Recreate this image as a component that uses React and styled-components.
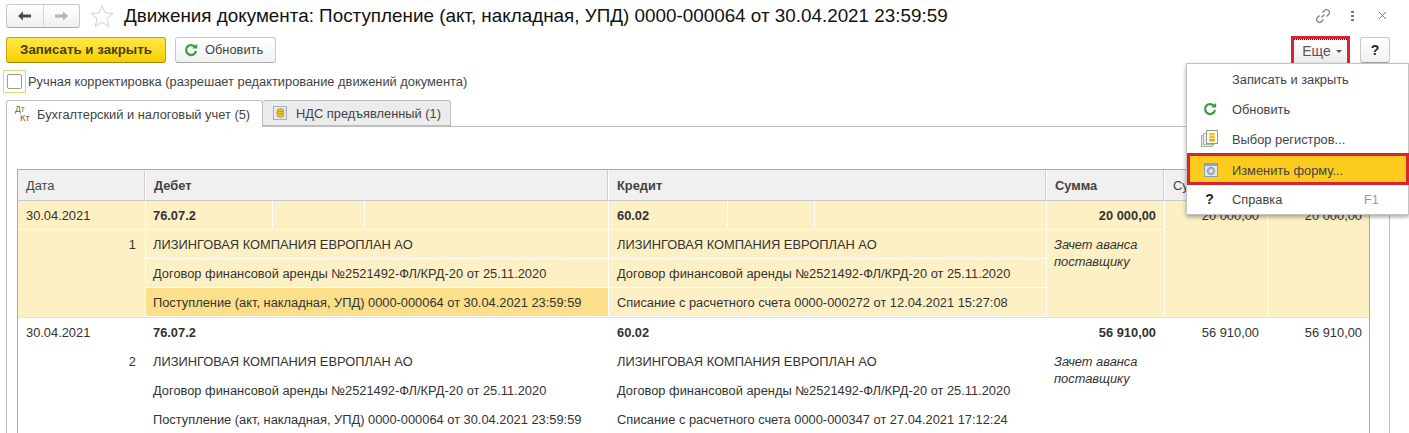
import React from "react";
import styled, { createGlobalStyle } from "styled-components";

const GlobalStyle = createGlobalStyle`
  html, body {
    margin: 0;
    padding: 0;
    background: #fff;
    overflow: hidden;
  }
  * {
    box-sizing: border-box;
  }
`;

const COLUMNS = "128px 463px 438px 118px 103px 102px";

const RECORDS = [
  {
    id: 1,
    selected: true,
    date: "30.04.2021",
    debit: "76.07.2",
    credit: "60.02",
    sum: "20 000,00",
    debitDoc: "Поступление (акт, накладная, УПД) 0000-000064 от 30.04.2021 23:59:59",
    creditDoc: "Списание с расчетного счета 0000-000272 от 12.04.2021 15:27:08",
  },
  {
    id: 2,
    selected: false,
    date: "30.04.2021",
    debit: "76.07.2",
    credit: "60.02",
    sum: "56 910,00",
    debitDoc: "Поступление (акт, накладная, УПД) 0000-000064 от 30.04.2021 23:59:59",
    creditDoc: "Списание с расчетного счета 0000-000347 от 27.04.2021 17:12:24",
  },
];

const COMPANY = "ЛИЗИНГОВАЯ КОМПАНИЯ ЕВРОПЛАН АО";
const CONTRACT = "Договор финансовой аренды №2521492-ФЛ/КРД-20 от 25.11.2020";

const RefreshIcon = ({ size = 14 }) => (
  <svg width={size} height={size} viewBox="0 0 14 14" fill="none">
    <path d="M11.2 4.200A5 5 0 1 0 12 8" stroke="#3a9a3e" strokeWidth="2.2" />
    <path d="M8.200 5.600h5V.8z" fill="#3a9a3e" />
  </svg>
);

const CoinsIcon = () => (
  <svg width="14" height="14" viewBox="0 0 14 14">
    <rect x="0.5" y="0.5" width="13" height="13" fill="#e6ecf3" stroke="#a3afbd" />
    <ellipse cx="7.5" cy="4.5" rx="3.6" ry="1.7" fill="#f3c52c" stroke="#a98614" strokeWidth="0.7" />
    <ellipse cx="7" cy="7" rx="3.6" ry="1.7" fill="#f3c52c" stroke="#a98614" strokeWidth="0.7" />
    <ellipse cx="7.500" cy="9.500" rx="3.6" ry="1.7" fill="#f3c52c" stroke="#a98614" strokeWidth="0.7" />
  </svg>
);

const RegistersIcon = () => (
  <svg width="17" height="18" viewBox="0 0 17 18">
    <rect x="0.5" y="5.5" width="11" height="11" fill="#dfe9df" stroke="#a9b5a9" />
    <rect x="2.5" y="3.5" width="11" height="11" fill="#eef1ea" stroke="#a9b5a9" />
    <rect x="5.5" y="0.5" width="11" height="13" fill="#fdfdf6" stroke="#8e9a8e" />
    <rect x="8" y="3" width="6" height="2.400" rx="1" fill="#f1c21f" />
    <rect x="8" y="6" width="6" height="2.400" rx="1" fill="#f1c21f" />
    <rect x="8" y="9" width="6" height="2.400" rx="1" fill="#e0a915" />
  </svg>
);

const FormIcon = () => (
  <svg width="14" height="14" viewBox="0 0 14 14">
    <rect x="0.5" y="0.5" width="13" height="13" fill="#dfe6ec" stroke="#8aa0b4" />
    <rect x="1" y="1" width="12" height="2" fill="#7aa6cf" />
    <circle cx="7" cy="8" r="3.6" fill="#b6bdc6" stroke="#8b939d" />
    <circle cx="7" cy="8" r="1.4" fill="#eceff2" />
  </svg>
);

const App = () => {
  return (
    <Page>
      <GlobalStyle />
      <TitleBar>
        <NavGroup>
          <NavButton>
            <svg width="14" height="10" viewBox="0 0 14 10">
              <path d="M0 5l5-4.500v3h8v3H5v3z" fill="#4a4a4a" />
            </svg>
          </NavButton>
          <NavButton>
            <svg width="14" height="10" viewBox="0 0 14 10">
              <path d="M14 5L9 .5v3H1v3h8v3z" fill="#b4b4b4" />
            </svg>
          </NavButton>
        </NavGroup>
        <Star width="24" height="24" viewBox="0 0 24 24">
          <path
            d="M12 1.500l3 7.400 8 .6-6.100 5.100 1.900 7.800L12 18.200l-6.800 4.200 1.900-7.800L1 9.500l8-.6z"
            fill="#fff"
            stroke="#cfcfcf"
          />
        </Star>
        <Title>Движения документа: Поступление (акт, накладная, УПД) 0000-000064 от 30.04.2021 23:59:59</Title>
        <WindowActions>
          <svg width="16" height="16" viewBox="0 0 16 16" fill="none" stroke="#7a7a7a" strokeWidth="1.1">
            <path d="M6.500 9.500l3-3" />
            <path d="M7.500 4.500l2-2a2.800 2.800 0 0 1 4 4l-2 2" />
            <path d="M8.500 11.500l-2 2a2.800 2.800 0 0 1-4-4l2-2" />
          </svg>
          <Kebab>
            <i />
            <i />
            <i />
          </Kebab>
          <svg width="9" height="9" viewBox="0 0 9 9" stroke="#777" strokeWidth="1">
            <path d="M1 1l7 7M8 1L1 8" />
          </svg>
        </WindowActions>
      </TitleBar>

      <Toolbar>
        <PrimaryButton>Записать и закрыть</PrimaryButton>
        <ToolButton>
          <RefreshIcon />
          Обновить
        </ToolButton>
        <ToolbarRight>
          <MoreHighlight>
            <MoreButton>
              Еще
              <Caret />
            </MoreButton>
          </MoreHighlight>
          <HelpButton>?</HelpButton>
        </ToolbarRight>
      </Toolbar>

      <CheckRow>
        <CheckFocus>
          <CheckBox />
        </CheckFocus>
        Ручная корректировка (разрешает редактирование движений документа)
      </CheckRow>

      <Tabs>
        <Tab $active>
          <DtKt>
            <span>Дт</span>
            <b>Кт</b>
          </DtKt>
          Бухгалтерский и налоговый учет (5)
        </Tab>
        <Tab>
          <CoinsIcon />
          НДС предъявленный (1)
        </Tab>
      </Tabs>

      <Panel>
        <Table>
          <HeaderRow>
            <HeadCell>Дата</HeadCell>
            <HeadCell $strong>Дебет</HeadCell>
            <HeadCell $strong>Кредит</HeadCell>
            <HeadCell $strong>Сумма</HeadCell>
            <HeadCell>Сумма</HeadCell>
            <HeadCell />
          </HeaderRow>
          {RECORDS.map((record) => (
            <Record key={record.id} $selected={record.selected}>
              <Cell $inset>{record.date}</Cell>
              <AccountCell>
                <AccountPart $width={127}>{record.debit}</AccountPart>
                <AccountPart $width={92} />
                <AccountPart />
              </AccountCell>
              <AccountCell>
                <AccountPart $width={119} $inset>
                  {record.credit}
                </AccountPart>
                <AccountPart $width={87} />
                <AccountPart />
              </AccountCell>
              <Cell $right $bold>
                {record.sum}
              </Cell>
              <Cell $right $tall>
                {record.sum}
              </Cell>
              <Cell $right $tall $last>
                {record.sum}
              </Cell>

              <NumberCell>{record.id}</NumberCell>
              <Cell>{COMPANY}</Cell>
              <Cell $inset>{COMPANY}</Cell>
              <CommentCell>Зачет аванса поставщику</CommentCell>

              <Cell>{CONTRACT}</Cell>
              <Cell $inset>{CONTRACT}</Cell>

              <Cell $current={record.selected}>{record.debitDoc}</Cell>
              <Cell $inset>{record.creditDoc}</Cell>
            </Record>
          ))}
        </Table>
      </Panel>

      <Menu>
        <MenuItem>
          <MenuIcon />
          Записать и закрыть
        </MenuItem>
        <MenuItem>
          <MenuIcon>
            <RefreshIcon />
          </MenuIcon>
          Обновить
        </MenuItem>
        <MenuItem>
          <MenuIcon>
            <RegistersIcon />
          </MenuIcon>
          Выбор регистров...
        </MenuItem>
        <MenuItem $active>
          <MenuIcon $active>
            <FormIcon />
          </MenuIcon>
          Изменить форму...
        </MenuItem>
        <MenuItem>
          <MenuIcon>
            <HelpMark>?</HelpMark>
          </MenuIcon>
          Справка
          <Shortcut>F1</Shortcut>
        </MenuItem>
      </Menu>
    </Page>
  );
};
export default App;

const Page = styled.div`
  position: relative;
  width: 1409px;
  height: 433px;
  overflow: hidden;
  background: #fff;
  color: #444;
  font-family: "Liberation Sans", Arial, sans-serif;
  font-size: 12.85px;
`;
const TitleBar = styled.div`
  display: flex;
  align-items: center;
  height: 31px;
  padding: 0 22px 0 6px;
`;
const NavGroup = styled.div`
  display: flex;
  width: 74px;
  height: 24px;
  border: 1px solid #c8c8c8;
  border-bottom-color: #a8a8a8;
  border-radius: 3px;
  background: linear-gradient(#fff, #f0f0f0);
`;
const NavButton = styled.div`
  flex: 1;
  display: flex;
  align-items: center;
  justify-content: center;
  & + & {
    border-left: 1px solid #d6d6d6;
  }
`;
const Star = styled.svg`
  margin-left: 10px;
  flex: none;
`;
const Title = styled.div`
  margin-left: 10px;
  color: #111;
  font-size: 18.85px;
  white-space: nowrap;
`;
const WindowActions = styled.div`
  display: flex;
  align-items: center;
  margin-left: auto;
  svg:last-child {
    margin-left: 24px;
  }
`;
const Kebab = styled.div`
  display: flex;
  flex-direction: column;
  gap: 2px;
  margin-left: 20px;
  i {
    display: block;
    width: 3px;
    height: 2px;
    background: #777;
  }
`;
const Toolbar = styled.div`
  display: flex;
  align-items: center;
  gap: 9px;
  height: 36px;
  padding: 1px 19px 0 6px;
`;
const PrimaryButton = styled.div`
  display: flex;
  align-items: center;
  justify-content: center;
  width: 160px;
  height: 26px;
  border: 1px solid #c6a300;
  border-bottom-color: #a88a00;
  border-radius: 3px;
  background: linear-gradient(#ffe84a, #f7cf00);
  color: #4b3f00;
  font-size: 13.3px;
  font-weight: bold;
`;
const ToolButton = styled.div`
  display: flex;
  align-items: center;
  gap: 7px;
  width: 101px;
  height: 26px;
  padding-left: 8px;
  border: 1px solid #c8c8c8;
  border-bottom-color: #a8a8a8;
  border-radius: 3px;
  background: linear-gradient(#fff, #f1f1f1);
`;
const ToolbarRight = styled.div`
  display: flex;
  align-items: center;
  gap: 10px;
  margin-left: auto;
`;
const MoreHighlight = styled.div`
  align-self: flex-start;
  width: 59px;
  height: 31px;
  margin-top: 4px;
  border: 3px solid #d9232e;
`;
const MoreButton = styled.div`
  display: flex;
  align-items: center;
  justify-content: center;
  gap: 5px;
  height: 25px;
  padding: 0 0 2px 3px;
  border-top: 1px dotted #222;
  border-bottom: 1px dotted #222;
  background: linear-gradient(#fff, #ececec);
  color: #555;
  font-size: 14px;
`;
const Caret = styled.span`
  width: 0;
  height: 0;
  margin-top: 2px;
  border-left: 3px solid transparent;
  border-right: 3px solid transparent;
  border-top: 3px solid #555;
`;
const HelpButton = styled.div`
  display: flex;
  align-items: center;
  justify-content: center;
  width: 30px;
  height: 26px;
  border: 1px solid #c8c8c8;
  border-bottom-color: #a8a8a8;
  border-radius: 3px;
  background: linear-gradient(#fff, #f1f1f1);
  color: #222;
  font-size: 14px;
  font-weight: bold;
`;
const CheckRow = styled.div`
  display: flex;
  align-items: center;
  gap: 2px;
  height: 24px;
  padding-left: 3px;
  margin-top: 2px;
`;
const CheckFocus = styled.div`
  display: flex;
  align-items: center;
  justify-content: center;
  width: 23px;
  height: 23px;
  border: 1px solid #e8d371;
`;
const CheckBox = styled.div`
  width: 15px;
  height: 15px;
  border: 1px solid #9a9a9a;
  border-radius: 2px;
  background: #fff;
`;
const Tabs = styled.div`
  display: flex;
  height: 27px;
  margin-top: 7px;
  padding-left: 6px;
`;
const Tab = styled.div`
  display: flex;
  align-items: center;
  gap: ${(p) => (p.$active ? "6px" : "9px")};
  width: ${(p) => (p.$active ? "257px" : "188px")};
  height: ${(p) => (p.$active ? "27px" : "26px")};
  padding-left: ${(p) => (p.$active ? "8px" : "10px")};
  border: 1px solid #bdbdbd;
  border-left-width: ${(p) => (p.$active ? "1px" : "0")};
  border-bottom: ${(p) => (p.$active ? "none" : "1px solid #bdbdbd")};
  border-radius: 3px 3px 0 0;
  background: ${(p) => (p.$active ? "#fff" : "#ececec")};
  position: relative;
  z-index: 1;
`;
const DtKt = styled.span`
  display: flex;
  flex-direction: column;
  width: 16px;
  height: 16px;
  font-size: 8.5px;
  line-height: 7.5px;
  span {
    color: #2c8a3c;
  }
  b {
    margin-left: 5px;
    color: #c0392b;
    font-weight: normal;
    font-size: 9.5px;
  }
`;
const Panel = styled.div`
  height: 308px;
  margin: -1px 19px 0 6px;
  padding: 42px 19px 0 10px;
  border: 1px solid #bdbdbd;
  border-bottom: none;
`;
const Table = styled.div`
  width: 1353px;
  border-top: 1px solid #a9a9a9;
  border-left: 1px solid #a9a9a9;
  border-right: 1px solid #a9a9a9;
`;
const HeaderRow = styled.div`
  display: grid;
  grid-template-columns: ${COLUMNS};
  height: 31px;
  border-bottom: 1px solid #c9c9c9;
  background: #f0f0f0;
`;
const HeadCell = styled.div`
  display: flex;
  align-items: center;
  padding-left: 8px;
  border-right: 1px solid #fff;
  box-shadow: inset -1px 0 0 #d0d0d0;
  color: #444;
  font-weight: ${(p) => (p.$strong ? "bold" : "normal")};
  white-space: nowrap;
  overflow: hidden;
`;
const Record = styled.div`
  display: grid;
  grid-template-columns: ${COLUMNS};
  grid-auto-rows: 29px;
  margin-bottom: 1px;
  background: ${(p) => (p.$selected ? "#fdf0c4" : "#fff")};
  --line: ${(p) => (p.$selected ? "#fff" : "transparent")};
  box-shadow: 0 1px 0 ${(p) => (p.$selected ? "#e2e2e2" : "transparent")};
`;
const Cell = styled.div`
  display: flex;
  align-items: center;
  justify-content: ${(p) => (p.$right ? "flex-end" : "flex-start")};
  grid-row: ${(p) => (p.$tall ? "span 4" : "auto")};
  align-self: stretch;
  padding: 0 ${(p) => (p.$right ? "8px" : "7px")} 0 ${(p) => (p.$inset ? "8px" : "7px")};
  border-right: ${(p) => (p.$last ? "none" : "1px solid var(--line)")};
  border-bottom: ${(p) => (p.$tall ? "none" : "1px solid var(--line)")};
  background: ${(p) => (p.$current ? "#fbdf8a" : "transparent")};
  color: #333;
  font-weight: ${(p) => (p.$bold ? "bold" : "normal")};
  white-space: nowrap;
  ${(p) => p.$tall && "align-items: flex-start; padding-top: 7px;"}
`;
const AccountCell = styled.div`
  display: flex;
  border-right: 1px solid var(--line);
  border-bottom: 1px solid var(--line);
`;
const AccountPart = styled.div`
  display: flex;
  align-items: center;
  flex: ${(p) => (p.$width ? `0 0 ${p.$width}px` : "1")};
  padding-left: ${(p) => (p.$inset ? "8px" : "7px")};
  border-right: 1px solid var(--line);
  color: #333;
  font-weight: bold;
  &:last-child {
    border-right: none;
  }
`;
const NumberCell = styled.div`
  grid-row: span 3;
  padding: 7px 9px 0 0;
  border-right: 1px solid var(--line);
  color: #333;
  text-align: right;
`;
const CommentCell = styled.div`
  grid-row: span 3;
  padding: 7px 20px 0 7px;
  border-right: 1px solid var(--line);
  color: #333;
  font-style: italic;
  line-height: 16.5px;
`;
const Menu = styled.div`
  position: absolute;
  top: 63px;
  left: 1186px;
  width: 223px;
  height: 152px;
  border: 1px solid #c4c4c4;
  background: #fff;
  box-shadow: 0 2px 4px rgba(0, 0, 0, 0.35);
  z-index: 5;
`;
const MenuItem = styled.div`
  display: flex;
  align-items: center;
  height: ${(p) => (p.$active ? "32px" : "30px")};
  margin: ${(p) => (p.$active ? "-1px -1px -1px 0" : "0")};
  padding-top: ${(p) => (p.$active ? "2px" : "0")};
  border: ${(p) => (p.$active ? "3px solid #d9232e" : "none")};
  background: ${(p) => (p.$active ? "#fccb1d" : "transparent")};
  color: #444;
`;
const MenuIcon = styled.span`
  display: flex;
  align-items: center;
  justify-content: center;
  width: ${(p) => (p.$active ? "42px" : "45px")};
  flex: none;
`;
const HelpMark = styled.span`
  color: #222;
  font-size: 14px;
  font-weight: bold;
`;
const Shortcut = styled.span`
  margin-left: auto;
  margin-right: 29px;
  color: #999;
`;
